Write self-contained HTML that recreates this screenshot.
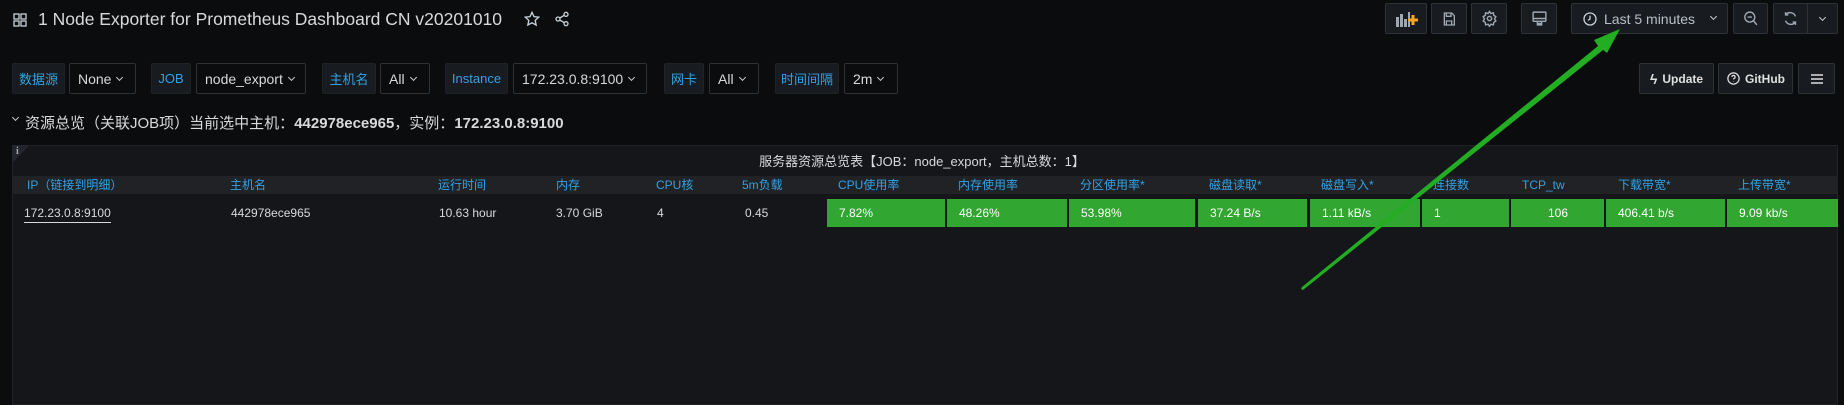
<!DOCTYPE html>
<html><head><meta charset="utf-8"><style>
*{box-sizing:border-box;margin:0;padding:0}
body{width:1844px;height:401px;background:#0b0c0e;font-family:"Liberation Sans","Noto Sans CJK SC",sans-serif;color:#d8d9da;position:relative;overflow:hidden;font-size:13px}
.a{position:absolute}
.btn{position:absolute;background:#181b1f;border:1px solid #2c3235;border-radius:2px;display:flex;align-items:center;justify-content:center;color:#c7d0d9}
.lbl{position:absolute;top:63px;height:31px;background:#181b1f;border:1px solid #202226;color:#33a2e5;font-size:13px;display:flex;align-items:center;justify-content:center;border-radius:2px}
.sel{position:absolute;top:63px;height:31px;background:#0b0c0e;border:1px solid #2c3235;font-size:14px;display:flex;align-items:center;padding-left:8px;border-radius:2px;color:#d8d9da}
.sel:after{content:"";width:4px;height:4px;border-right:1.3px solid #ccc;border-bottom:1.3px solid #ccc;transform:rotate(45deg);margin-left:6px;margin-top:-3px}
.h{position:absolute;top:176px;height:18px;line-height:18px;color:#33a2e5;font-size:12px}
.d{position:absolute;top:206px;font-size:12px;color:#d8d9da}
.g{position:absolute;top:199px;height:28px;background:#31a630;color:#fff;font-size:12px;padding-left:12px;line-height:28px}
</style></head><body>
<svg class="a" style="left:13px;top:13px" width="14" height="14" viewBox="0 0 14 14" fill="none" stroke="#c7d0d9" stroke-width="1.3"><rect x="1" y="1" width="5" height="5"/><rect x="8" y="1" width="5" height="5"/><rect x="1" y="8" width="5" height="5"/><rect x="8" y="8" width="5" height="5"/></svg>
<div class="a" style="left:38px;top:9px;font-size:17.5px;color:#d8d9da">1 Node Exporter for Prometheus Dashboard CN v20201010</div>
<svg class="a" style="left:524px;top:11px" width="16" height="16" viewBox="0 0 24 24" fill="none" stroke="#c7d0d9" stroke-width="2"><path d="M12 2l3 6.5 7 .8-5.2 4.8 1.4 7L12 17.6 5.8 21l1.4-7L2 9.3l7-.8z"/></svg>
<svg class="a" style="left:554px;top:11px" width="16" height="16" viewBox="0 0 24 24" fill="none" stroke="#c7d0d9" stroke-width="2"><circle cx="18" cy="5" r="3"/><circle cx="6" cy="12" r="3"/><circle cx="18" cy="19" r="3"/><path d="M8.6 13.5l6.8 4M15.4 6.5l-6.8 4"/></svg>
<div class="btn" style="left:1385px;top:3px;width:42px;height:31px"><svg width="24" height="16" viewBox="0 0 24 16"><g fill="#9fa7b3"><rect x="2" y="6" width="3" height="10"/><rect x="6" y="3" width="3" height="13"/><rect x="10" y="8" width="3" height="8"/><rect x="14" y="1" width="2" height="15"/></g><path d="M19 4v10M14 9h10" stroke="#f5a623" stroke-width="3"/></svg></div>
<div class="btn" style="left:1431px;top:3px;width:36px;height:31px"><svg width="16" height="16" viewBox="0 0 24 24" fill="none" stroke="#9fa7b3" stroke-width="2"><path d="M5 3h11l4 4v14H5z"/><path d="M8 3v5h7V3M8 21v-6h8v6"/></svg></div>
<div class="btn" style="left:1471px;top:3px;width:36px;height:31px"><svg width="17" height="17" viewBox="0 0 24 24" fill="none" stroke="#9fa7b3" stroke-width="2"><circle cx="12" cy="12" r="3"/><path d="M12 2l2 3 3.5-1 .5 3.5 3 2-2 3 2 3-3 2-.5 3.5-3.5-1-2 3-2-3-3.5 1L6 17.5l-3-2 2-3-2-3 3-2L6.5 4 10 5z"/></svg></div>
<div class="btn" style="left:1521px;top:3px;width:36px;height:31px"><svg width="17" height="17" viewBox="0 0 24 24" fill="none" stroke="#9fa7b3" stroke-width="2"><rect x="3" y="3" width="18" height="13" rx="1"/><path d="M3 12h18M9 16v3h6v-3M8 21h8"/></svg></div>
<div class="btn" style="left:1571px;top:3px;width:157px;height:31px;justify-content:flex-start;padding-left:10px;font-size:14px;color:#b7bfc9"><svg width="16" height="16" viewBox="0 0 24 24" fill="none" stroke="#c7d0d9" stroke-width="2"><circle cx="12" cy="12" r="9"/><path d="M12 7v5l-3 2"/></svg><span style="margin-left:6px">Last 5 minutes</span><span style="margin-left:16px;width:5px;height:5px;border-right:1.5px solid #ccc;border-bottom:1.5px solid #ccc;transform:rotate(45deg);margin-top:-4px"></span></div>
<div class="btn" style="left:1733px;top:3px;width:35px;height:31px"><svg width="17" height="17" viewBox="0 0 24 24" fill="none" stroke="#9fa7b3" stroke-width="2"><circle cx="11" cy="10" r="7"/><path d="M8 10h6M16 15l5 6"/></svg></div>
<div class="btn" style="left:1773px;top:3px;width:65px;height:31px;justify-content:flex-start"><div style="width:35px;display:flex;justify-content:center;border-right:1px solid #2c3235;height:29px;align-items:center"><svg width="17" height="17" viewBox="0 0 24 24" fill="none" stroke="#9fa7b3" stroke-width="2"><path d="M19 9a8 8 0 0 0-14-2M5 3v4h4M5 15a8 8 0 0 0 14 2M19 21v-4h-4"/></svg></div><div style="width:30px;display:flex;justify-content:center"><span style="width:5px;height:5px;border-right:1.5px solid #ccc;border-bottom:1.5px solid #ccc;transform:rotate(45deg);margin-top:-3px"></span></div></div>
<div class="lbl" style="left:12px;width:53px">数据源</div><div class="sel" style="left:69px;width:67px">None</div>
<div class="lbl" style="left:151px;width:40px">JOB</div><div class="sel" style="left:196px;width:110px">node_export</div>
<div class="lbl" style="left:322px;width:54px">主机名</div><div class="sel" style="left:380px;width:50px">All</div>
<div class="lbl" style="left:445px;width:63px">Instance</div><div class="sel" style="left:513px;width:134px">172.23.0.8:9100</div>
<div class="lbl" style="left:664px;width:40px">网卡</div><div class="sel" style="left:709px;width:50px">All</div>
<div class="lbl" style="left:775px;width:64px">时间间隔</div><div class="sel" style="left:844px;width:54px">2m</div>
<div class="btn" style="left:1639px;top:63px;width:75px;height:31px;font-size:12px;font-weight:bold;color:#e0e0e0"><span style="font-size:14px;margin-right:5px">ϟ</span>Update</div>
<div class="btn" style="left:1718px;top:63px;width:75px;height:31px;font-size:12px;font-weight:bold;color:#e0e0e0"><svg width="15" height="15" viewBox="0 0 24 24" fill="none" stroke="#e0e0e0" stroke-width="2" style="margin-right:4px"><circle cx="12" cy="12" r="9"/><path d="M9.5 9.5a2.5 2.5 0 1 1 3.5 2.3c-.7.3-1 .8-1 1.5M12 17v.5"/></svg>GitHub</div>
<div class="btn" style="left:1798px;top:63px;width:37px;height:31px"><svg width="14" height="12" viewBox="0 0 14 12" stroke="#e0e0e0" stroke-width="1.6"><path d="M1 2h12M1 6h12M1 10h12"/></svg></div>
<div class="a" style="left:13px;top:115px;width:5px;height:5px;border-right:1.3px solid #ccc;border-bottom:1.3px solid #ccc;transform:rotate(45deg)"></div>
<div class="a" style="left:25px;top:112px;font-size:15px;color:#d8d9da">资源总览（关联JOB项）当前选中主机：<b>442978ece965</b>，实例：<b>172.23.0.8:9100</b></div>
<div class="a" style="left:12px;top:145px;width:1826px;height:260px;background:#141619;border:1px solid #202226"></div>
<div class="a" style="left:12px;top:145px;width:0;height:0;border-top:18px solid #22252b;border-right:18px solid transparent"></div>
<div class="a" style="left:16px;top:146px;font-size:10px;color:#aaa;font-family:'Liberation Serif',serif;font-weight:bold">i</div>
<div class="a" style="left:0;width:1844px;top:151px;text-align:center;font-size:13px;color:#d8d9da">服务器资源总览表【JOB：node_export，主机总数：1】</div>
<div class="a" style="left:13px;top:176px;width:1824px;height:18px;background:#202226"></div>
<div class="h" style="left:27px">IP（链接到明细）</div>
<div class="h" style="left:230px">主机名</div>
<div class="h" style="left:438px">运行时间</div>
<div class="h" style="left:556px">内存</div>
<div class="h" style="left:656px">CPU核</div>
<div class="h" style="left:742px">5m负载</div>
<div class="h" style="left:838px">CPU使用率</div>
<div class="h" style="left:958px">内存使用率</div>
<div class="h" style="left:1080px">分区使用率*</div>
<div class="h" style="left:1209px">磁盘读取*</div>
<div class="h" style="left:1321px">磁盘写入*</div>
<div class="h" style="left:1433px">连接数</div>
<div class="h" style="left:1522px">TCP_tw</div>
<div class="h" style="left:1618px">下载带宽*</div>
<div class="h" style="left:1738px">上传带宽*</div>
<div class="d" style="left:24px;border-bottom:1px solid #d8d9da;padding-bottom:2px">172.23.0.8:9100</div>
<div class="d" style="left:231px">442978ece965</div>
<div class="d" style="left:439px">10.63 hour</div>
<div class="d" style="left:556px">3.70 GiB</div>
<div class="d" style="left:657px">4</div>
<div class="d" style="left:745px">0.45</div>
<div class="g" style="left:827px;width:118px">7.82%</div>
<div class="g" style="left:947px;width:120px">48.26%</div>
<div class="g" style="left:1069px;width:126px">53.98%</div>
<div class="g" style="left:1198px;width:109px">37.24 B/s</div>
<div class="g" style="left:1310px;width:110px">1.11 kB/s</div>
<div class="g" style="left:1422px;width:87px">1</div>
<div class="g" style="left:1511px;width:93px;padding-left:37px">106</div>
<div class="g" style="left:1606px;width:119px">406.41 b/s</div>
<div class="g" style="left:1727px;width:111px">9.09 kb/s</div>
<svg class="a" style="left:0;top:0" width="1844" height="401"><polygon points="1301,289 1302,287 1598,46 1594,40 1620,29 1607,53 1603,50 1303,290" fill="#22ad22"/></svg>
</body></html>
